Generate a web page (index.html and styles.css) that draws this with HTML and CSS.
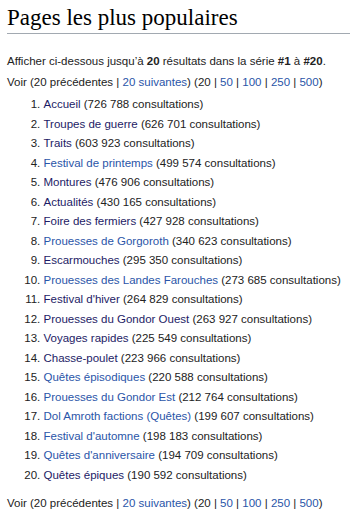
FILE: index.html
```html
<!DOCTYPE html>
<html lang="fr">
<head>
<meta charset="utf-8">
<title>Pages les plus populaires</title>
<link rel="stylesheet" href="styles.css">
</head>
<body>
<div class="page">
  <h1 class="title">Pages les plus populaires</h1>
  <p class="intro">Afficher ci-dessous jusqu’à <b>20</b> résultats dans la série <b>#1</b> à <b>#20</b>.</p>
  <p class="nav">Voir (20 précédentes | <a class="new" href="#">20 suivantes</a>) (20 | <a class="new" href="#">50</a> | <a class="new" href="#">100</a> | <a class="new" href="#">250</a> | <a class="new" href="#">500</a>)</p>
  <ol class="list">
    <li><a class="seen" href="#">Accueil</a> (726 788 consultations)</li>
    <li><a class="seen" href="#">Troupes de guerre</a> (626 701 consultations)</li>
    <li><a class="seen" href="#">Traits</a> (603 923 consultations)</li>
    <li><a class="new" href="#">Festival de printemps</a> (499 574 consultations)</li>
    <li><a class="seen" href="#">Montures</a> (476 906 consultations)</li>
    <li><a class="seen" href="#">Actualités</a> (430 165 consultations)</li>
    <li><a class="seen" href="#">Foire des fermiers</a> (427 928 consultations)</li>
    <li><a class="new" href="#">Prouesses de Gorgoroth</a> (340 623 consultations)</li>
    <li><a class="seen" href="#">Escarmouches</a> (295 350 consultations)</li>
    <li><a class="new" href="#">Prouesses des Landes Farouches</a> (273 685 consultations)</li>
    <li><a class="seen" href="#">Festival d'hiver</a> (264 829 consultations)</li>
    <li><a class="seen" href="#">Prouesses du Gondor Ouest</a> (263 927 consultations)</li>
    <li><a class="seen" href="#">Voyages rapides</a> (225 549 consultations)</li>
    <li><a class="seen" href="#">Chasse-poulet</a> (223 966 consultations)</li>
    <li><a class="new" href="#">Quêtes épisodiques</a> (220 588 consultations)</li>
    <li><a class="new" href="#">Prouesses du Gondor Est</a> (212 764 consultations)</li>
    <li><a class="new" href="#">Dol Amroth factions (Quêtes)</a> (199 607 consultations)</li>
    <li><a class="new" href="#">Festival d'automne</a> (198 183 consultations)</li>
    <li><a class="new" href="#">Quêtes d'anniversaire</a> (194 709 consultations)</li>
    <li><a class="seen" href="#">Quêtes épiques</a> (190 592 consultations)</li>
  </ol>
  <p class="nav nav-bottom">Voir (20 précédentes | <a class="new" href="#">20 suivantes</a>) (20 | <a class="new" href="#">50</a> | <a class="new" href="#">100</a> | <a class="new" href="#">250</a> | <a class="new" href="#">500</a>)</p>
</div>
</body>
</html>
```

FILE: styles.css
```css
html, body {
  margin: 0;
  padding: 0;
  background: #ffffff;
}
.page {
  padding: 0 0 0 7px;
  font-family: "Liberation Sans", Arial, sans-serif;
  font-size: 11.5px;
  line-height: 19.5px;
  color: #222222;
}
.title {
  margin: 3px 0 0 0;
  font-family: "Liberation Serif", "Times New Roman", serif;
  font-weight: normal;
  font-size: 23px;
  line-height: 30px;
  color: #000000;
  border-bottom: 1px solid #a2a9b1;
}
.intro {
  margin: 18px 0 0 0;
}
.nav {
  margin: 1px 0 0 0;
}
.nav-bottom {
  margin-top: 9px;
}
.list {
  margin: 3px 0 0 0;
  padding-left: 36.5px;
}
.list li {
  margin: 0;
}
a {
  text-decoration: none;
}
a.new {
  color: #2a55a8;
}
a.seen {
  color: #1d1b66;
}
b {
  font-weight: bold;
}
```
